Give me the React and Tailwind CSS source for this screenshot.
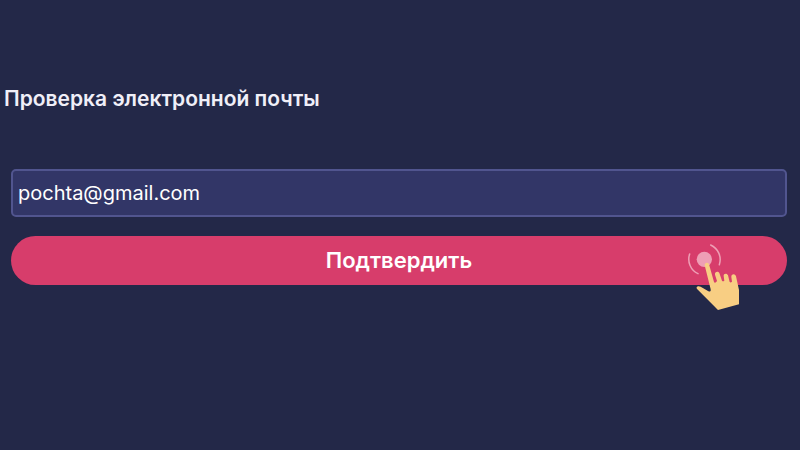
function TapPointer() {
  return (
    <svg
      className="pointer-events-none absolute right-[37px] -top-px h-20 w-[70px]"
      viewBox="0 0 210 240"
      fill="none"
      aria-hidden="true"
    >
      <circle cx="73" cy="73" r="23" fill="#ee9fb5" />
      <g stroke="#ee9fb5" strokeWidth="4.5" strokeLinecap="round">
        <path d="M29 57A48 48 0 0 0 54 116" />
        <path d="M92 30A48 48 0 0 1 118 89" />
      </g>
      <path
        fill="#f8ce83"
        d="M74 91C73 83 84 80 87 88L102 141Q104 145 108 142L111 138L105 119C103 111 114 107 118 114L126 137Q129 141 133 137L131 123C130 115 141 113 144 121L149 141Q152 144 156 140L154 126C153 116 166 115 168 124L177 165V208L114 225L52 163C46 155 54 151 62 155L84 168Q94 173 92 163Z"
      />
    </svg>
  );
}

export default function App() {
  return (
    <main className="min-h-screen bg-[#232848] pt-[83px] font-['Inter',sans-serif] text-white">
      <h1 className="pl-1 text-[21px] leading-8 font-semibold text-[#f0eff8]">
        Проверка электронной почты
      </h1>
      <form
        className="mt-[54px] mr-[13px] ml-[11px] flex flex-col gap-[19px]"
        onSubmit={(event) => event.preventDefault()}
      >
        <input
          type="email"
          aria-label="Электронная почта"
          defaultValue="pochta@gmail.com"
          className="h-12 w-full rounded-[5px] border-2 border-[#51558f] bg-[#323667] px-[5px] text-[20px] text-white outline-none"
        />
        <div className="relative">
          <button
            type="submit"
            className="block h-[49px] w-full rounded-full bg-[#d73d6b] text-[22px] font-semibold text-white"
          >
            Подтвердить
          </button>
          <TapPointer />
        </div>
      </form>
    </main>
  );
}
